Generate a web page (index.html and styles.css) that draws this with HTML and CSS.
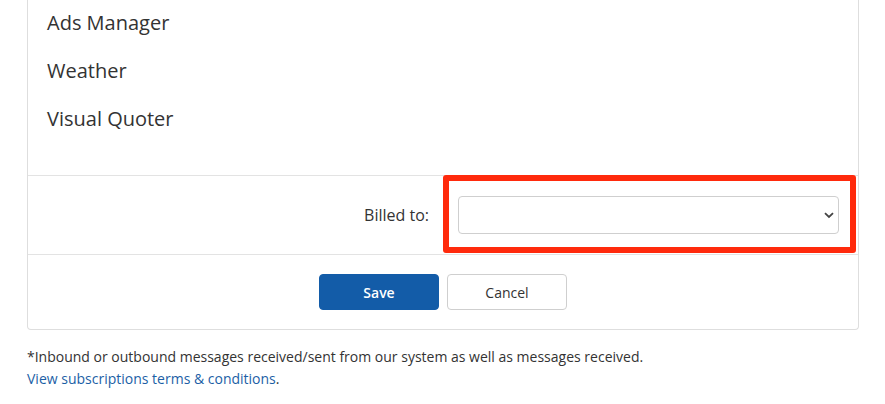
FILE: index.html
```html
<!DOCTYPE html>
<html>
<head>
<meta charset="utf-8">
<link rel="stylesheet" href="styles.css">
</head>
<body>
<div class="page">
  <div class="card">
    <ul class="apps">
      <li>Ads Manager</li>
      <li>Weather</li>
      <li>Visual Quoter</li>
    </ul>
    <div class="billed-row">
      <label class="billed-label" for="billed">Billed to:</label>
      <div class="billed-field">
        <select id="billed" class="select"><option></option></select>
        <span class="highlight"></span>
      </div>
    </div>
    <div class="actions">
      <button class="btn btn-primary">Save</button>
      <button class="btn btn-default">Cancel</button>
    </div>
  </div>
  <p class="note">*Inbound or outbound messages received/sent from our system as well as messages received.<br><a href="#" class="link">View subscriptions terms &amp; conditions</a>.</p>
</div>
</body>
</html>
```
FILE: styles.css
```css
* { box-sizing: border-box; }
html, body { margin: 0; padding: 0; background: #fff; }
body {
  font-family: "Open Sans", "Liberation Sans", sans-serif;
  color: #333;
}
.page {
  padding: 0 26px 0 27px;
}
.card {
  border: 1px solid #dedede;
  border-top: none;
  border-radius: 0 0 4px 4px;
}
.apps {
  list-style: none;
  margin: 0;
  padding: 0 19px 32px;
  margin-top: -1px;
}
.apps li {
  font-size: 20px;
  line-height: 48px;
  height: 48px;
}
.billed-row {
  display: grid;
  grid-template-columns: 1fr 1fr;
  border-top: 1px solid #e3e3e3;
  border-bottom: 1px solid #e3e3e3;
  padding: 20px 0;
}
.billed-label {
  font-size: 16px;
  text-align: right;
  align-self: center;
  padding-right: 14px;
}
.billed-field {
  position: relative;
  padding: 0 19px 0 15px;
}
.select {
  display: block;
  width: 100%;
  height: 38px;
  border: 1px solid #cfcfcf;
  border-radius: 4px;
  background: #fff;
  font-family: inherit;
  font-size: 14px;
  appearance: none;
  -webkit-appearance: none;
  background-image: url("data:image/svg+xml;utf8,<svg xmlns='http://www.w3.org/2000/svg' width='10' height='7' viewBox='0 0 10 7'><path d='M1 1.2 L5 5 L9 1.2' fill='none' stroke='%23444' stroke-width='1.8'/></svg>");
  background-repeat: no-repeat;
  background-position: right 4px center;
}
.highlight {
  position: absolute;
  left: 0;
  right: 2px;
  top: -21px;
  bottom: -19px;
  border: 6px solid #ff2a0c;
  border-radius: 3px;
  pointer-events: none;
}
.actions {
  display: flex;
  justify-content: center;
  gap: 8px;
  padding: 19px 0 19px;
}
.btn {
  width: 120px;
  height: 36px;
  border-radius: 4px;
  font-family: inherit;
  font-size: 14px;
  cursor: pointer;
}
.btn-primary {
  background: #135ca8;
  border: 1px solid #135ca8;
  color: #fff;
  font-weight: 600;
}
.btn-default {
  background: #fff;
  border: 1px solid #cfcfcf;
  color: #333;
}
.note {
  margin: 16px 0 0;
  font-size: 14px;
  line-height: 22px;
  color: #333;
}
.link {
  color: #1c5fa6;
  text-decoration: none;
}
```
